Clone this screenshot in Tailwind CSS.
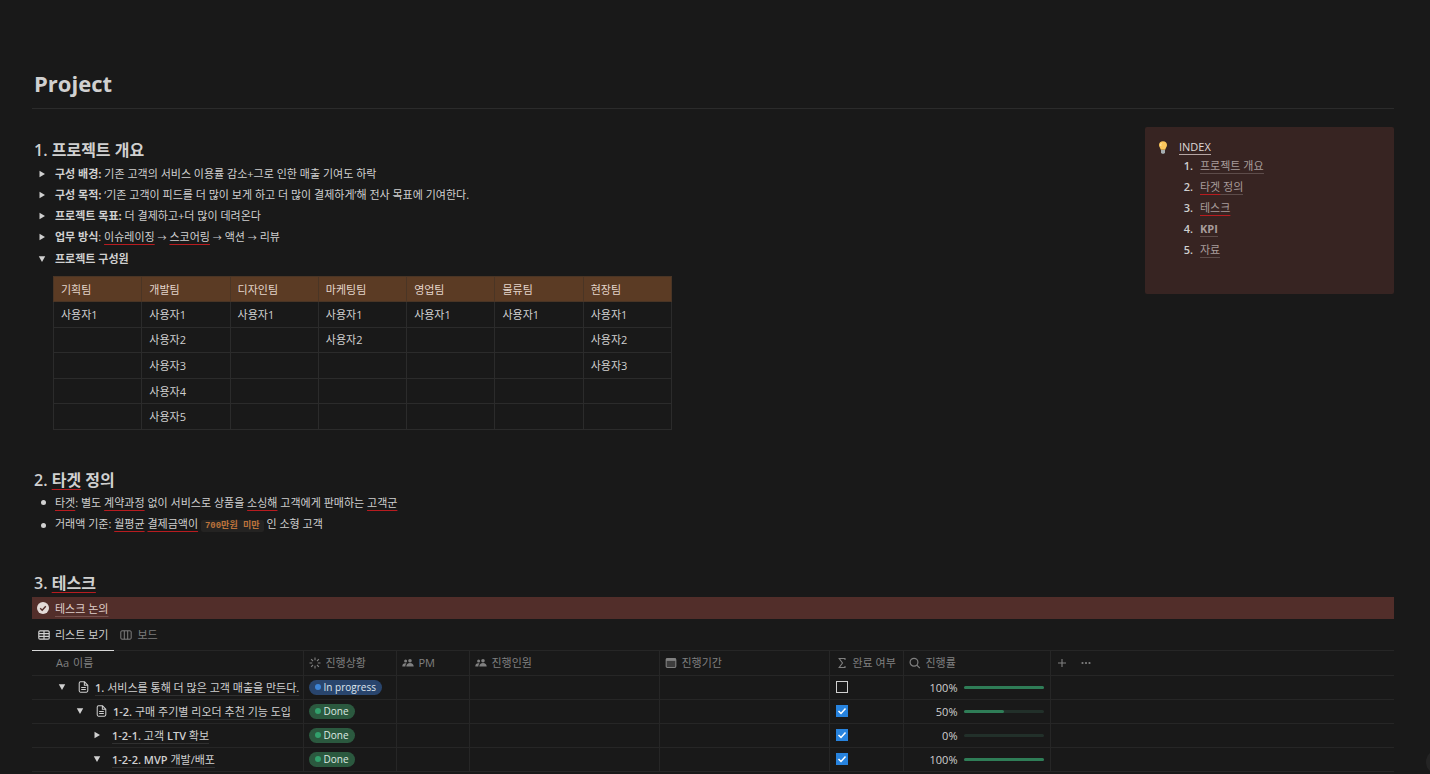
<!DOCTYPE html>
<html lang="ko">
<head>
<meta charset="utf-8">
<title>Project</title>
<script src="https://cdn.jsdelivr.net/npm/@tailwindcss/browser@4"></script>
</head>
<body class="min-h-screen overflow-hidden bg-[#191919] font-['Open_Sans','Noto_Sans_CJK_KR',sans-serif] text-[11px] leading-[21px] text-[#d0d0d0]">
<svg class="hidden">
  <symbol id="right" viewBox="0 0 8 8"><path d="M1.5 .8 7 4 1.5 7.2z" fill="currentColor"/></symbol>
  <symbol id="down" viewBox="0 0 8 8"><path d="M.8 1.2h6.4L4 7z" fill="currentColor"/></symbol>
  <symbol id="page" viewBox="0 0 12 14"><path d="M2.5 1h4.7L11 4.8V11.500a1.500 1.500 0 0 1-1.500 1.500h-7A1.500 1.500 0 0 1 1 11.500v-9A1.500 1.500 0 0 1 2.500 1zM7 1v4h4M3.300 7.500h5.400M3.300 10h5.400" fill="none" stroke="currentColor" stroke-width="1.200"/></symbol>
  <symbol id="people" viewBox="0 0 12 12"><g fill="currentColor"><circle cx="3.600" cy="4" r="1.500"/><circle cx="8" cy="3.700" r="1.800"/><path d="M.3 9.500c0-2 1.200-3.200 3-3.200.5 0 .9.100 1.200.300C3.700 7.300 3.400 8.300 3.400 9.500zM4.300 9.500c0-2.200 1.500-3.400 3.700-3.400s3.700 1.200 3.700 3.400z"/></g></symbol>
</svg>
<main class="pt-[67px] pr-9 pl-8">
  <h1 class="h-8 px-0.5 text-[22px] leading-8 font-bold">Project</h1>
  <hr class="mt-[9px] border-[#2b2b2b]">

  <div class="mt-[18px] flex items-start justify-between">
    <div class="pt-[11px]">
      <h2 class="px-0.5 text-[16px] leading-6 font-semibold">1. 프로젝트 개요</h2>
      <ul class="mt-px">
        <li class="flex items-center"><button class="flex w-[23px] pl-1.5" aria-label="펼치기"><svg class="size-2"><use href="#right"/></svg></button><p><b>구성 배경:</b> 기존 고객의 서비스 이용률 감소+그로 인한 매출 기여도 하락</p></li>
        <li class="flex items-center"><button class="flex w-[23px] pl-1.5" aria-label="펼치기"><svg class="size-2"><use href="#right"/></svg></button><p><b>구성 목적:</b> ‘기존 고객이 피드를 더 많이 보게 하고 더 많이 결제하게’해 전사 목표에 기여한다.</p></li>
        <li class="flex items-center"><button class="flex w-[23px] pl-1.5" aria-label="펼치기"><svg class="size-2"><use href="#right"/></svg></button><p><b>프로젝트 목표:</b> 더 결제하고+더 많이 데려온다</p></li>
        <li class="flex items-center"><button class="flex w-[23px] pl-1.5" aria-label="펼치기"><svg class="size-2"><use href="#right"/></svg></button><p><b>업무 방식</b>: <span class="underline decoration-[#b81c20] decoration-1 underline-offset-3">이슈레이징</span> <span class="text-[9px]">→</span> <span class="underline decoration-[#b81c20] decoration-1 underline-offset-3">스코어링</span> <span class="text-[9px]">→</span> 액션 <span class="text-[9px]">→</span> 리뷰</p></li>
        <li class="flex items-center"><button class="flex w-[23px] pl-1.5" aria-label="접기"><svg class="size-2"><use href="#down"/></svg></button><p><b>프로젝트 구성원</b></p></li>
      </ul>
      <table class="mt-[7px] ml-[21px] h-[154px] w-[619px] table-fixed border-collapse text-left [&_td]:border [&_td]:border-[#2b2b2b] [&_td]:px-[7px] [&_th]:border [&_th]:border-[#4a3525] [&_th]:px-[7px] [&_th]:font-normal [&_tr]:h-[25px]">
        <thead class="bg-[#5b3b24] text-[#e4d5cb]"><tr><th>기획팀</th><th>개발팀</th><th>디자인팀</th><th>마케팅팀</th><th>영업팀</th><th>물류팀</th><th>현장팀</th></tr></thead>
        <tbody>
          <tr><td>사용자1</td><td>사용자1</td><td>사용자1</td><td>사용자1</td><td>사용자1</td><td>사용자1</td><td>사용자1</td></tr>
          <tr><td></td><td>사용자2</td><td></td><td>사용자2</td><td></td><td></td><td>사용자2</td></tr>
          <tr><td></td><td>사용자3</td><td></td><td></td><td></td><td></td><td>사용자3</td></tr>
          <tr><td></td><td>사용자4</td><td></td><td></td><td></td><td></td><td></td></tr>
          <tr><td></td><td>사용자5</td><td></td><td></td><td></td><td></td><td></td></tr>
        </tbody>
      </table>
    </div>
    <aside class="flex h-[167px] w-[249px] gap-2.5 rounded-xs bg-[#372422] pt-[9px] pl-3">
      <svg class="mt-[5px] h-[13px] w-3" viewBox="0 0 12 13"><path d="M6 .3C3.700.3 2 2 2 4.100c0 1.900 1.300 2.800 1.800 4.700h4.400C8.700 6.900 10 6 10 4.100 10 2 8.300.3 6 .3z" fill="#fcc75c"/><path d="M4.500 2.200C3.700 2.800 3.500 4 4 5" stroke="#fff0b8" fill="none"/><path d="M4 9h4v2.600L7.100 12.800H4.900L4 11.600z" fill="#a5adb0"/></svg>
      <nav>
        <a href="#" class="border-b border-[#b5a5a3] text-[#ded8d7]">INDEX</a>
        <ol class="-mt-0.5 list-decimal pl-[17px] marker:font-semibold [&_a]:border-b [&_a]:border-[#5d4c4a] [&_a]:text-[#a89c9b] [&_li]:h-[21px] [&_li]:pl-1">
          <li><a href="#">프로젝트 개요</a></li>
          <li><a href="#"><span class="underline decoration-[#b81c20] decoration-1 underline-offset-3">타겟</span> 정의</a></li>
          <li><a href="#"><span class="underline decoration-[#b81c20] decoration-1 underline-offset-3">테스크</span></a></li>
          <li><a href="#" class="font-bold">KPI</a></li>
          <li><a href="#">자료</a></li>
        </ol>
      </nav>
    </aside>
  </div>

  <h2 class="mt-[38px] px-0.5 text-[16px] leading-6 font-semibold">2. <span class="underline decoration-[#b81c20] decoration-1 underline-offset-3">타겟</span> 정의</h2>
  <ul>
    <li class="flex items-center"><i class="mr-[9px] ml-[9px] size-[5px] rounded-full bg-[#d0d0d0]"></i><p><span class="underline decoration-[#b81c20] decoration-1 underline-offset-3">타겟</span>: 별도 <span class="underline decoration-[#b81c20] decoration-1 underline-offset-3">계약과정</span> 없이 서비스로 상품을 <span class="underline decoration-[#b81c20] decoration-1 underline-offset-3">소싱해</span> 고객에게 판매하는 <span class="underline decoration-[#b81c20] decoration-1 underline-offset-3">고객군</span></p></li>
    <li class="flex items-center"><i class="mr-[9px] ml-[9px] size-[5px] rounded-full bg-[#d0d0d0]"></i><p>거래액 기준: <span class="underline decoration-[#b81c20] decoration-1 underline-offset-3">월평균</span> <span class="underline decoration-[#b81c20] decoration-1 underline-offset-3">결제금액이</span> <code class="rounded-xs bg-[#242322] px-1 py-px font-['Liberation_Mono','Noto_Sans_CJK_KR',monospace] text-[9px] font-bold text-[#bd733c]">700만원 미만</code> 인 소형 고객</p></li>
  </ul>

  <h2 class="mt-[34px] px-0.5 text-[16px] leading-6 font-semibold">3. <span class="underline decoration-[#b81c20] decoration-1 underline-offset-3">테스크</span></h2>
  <div class="mt-0.5 flex h-[22px] items-center gap-1.5 bg-[#522e2a] pl-[5px] text-[#e0d0cc]">
    <svg class="size-3" viewBox="0 0 12 12"><circle cx="6" cy="6" r="6" fill="#e3dbd8"/><path d="m3.200 6.200 2 2 3.600-4" fill="none" stroke="#522e2a" stroke-width="1.400"/></svg>
    <a href="#" class="underline decoration-[#75514d] underline-offset-3">테스크 논의</a>
  </div>
  <div class="flex h-8 border-b border-[#262626]" role="tablist">
    <button role="tab" aria-selected="true" class="-mb-px flex items-center gap-[5px] border-b border-[#d8d8d8] px-1.5"><svg class="h-2.5 w-3" viewBox="0 0 12 10"><path d="M2 .8h8q1.200 0 1.200 1.200v6q0 1.200-1.200 1.200H2Q.8 9.200.8 8V2Q.8.8 2 .8zM.8 3.600h10.400M.8 6.400h10.400M6 .8v8.400" fill="none" stroke="currentColor" stroke-width="1.200"/></svg>리스트 보기</button>
    <button role="tab" aria-selected="false" class="flex items-center gap-[5px] px-1.5 text-[#7d7d7d]"><svg class="h-2.5 w-3" viewBox="0 0 12 10"><path d="M2 .8h8q1.200 0 1.200 1.200v6q0 1.200-1.200 1.200H2Q.8 9.200.8 8V2Q.8.8 2 .8zM4.300.8v8.400M7.700.8v8.400" fill="none" stroke="currentColor"/></svg>보드</button>
  </div>
  <table class="w-full table-fixed border-collapse text-left whitespace-nowrap [&_a]:underline [&_a]:decoration-[#303030] [&_a]:underline-offset-3 [&_td]:border-r [&_td]:border-[#262626] [&_td]:p-0 [&_th]:border-r [&_th]:border-[#262626] [&_th]:p-0 [&_th]:font-normal [&_tr]:h-6 [&_tr]:border-b [&_tr]:border-[#262626] [&_tr>:last-child]:border-r-0">
    <colgroup><col class="w-[271px]"><col class="w-[93px]"><col class="w-[73px]"><col class="w-[190px]"><col class="w-[170px]"><col class="w-[74px]"><col class="w-[147px]"><col></colgroup>
    <thead class="text-[#808080]"><tr>
      <th><span class="flex gap-1 pl-6"><span>Aa</span>이름</span></th>
      <th><span class="flex items-center gap-[5px] pl-[5px]"><svg class="size-3" viewBox="0 0 12 12"><path d="M6 .5v2.700M6 8.800v2.700M.5 6h2.700M8.800 6h2.700M2.100 2.100 4 4M8 8l1.900 1.900M2.100 9.900 4 8M8 4l1.900-1.900" stroke="currentColor" stroke-width="1.100"/></svg>진행상황</span></th>
      <th><span class="flex items-center gap-[5px] pl-[5px]"><svg class="size-3"><use href="#people"/></svg>PM</span></th>
      <th><span class="flex items-center gap-[5px] pl-[5px]"><svg class="size-3"><use href="#people"/></svg>진행인원</span></th>
      <th><span class="flex items-center gap-[5px] pl-[5px]"><svg class="size-3" viewBox="0 0 12 12"><path d="M1.200 2.700q0-1.200 1.200-1.200h7.200q1.200 0 1.200 1.200v6.600q0 1.200-1.200 1.200H2.400q-1.200 0-1.200-1.200z" fill="#808080" fill-opacity=".35" stroke="currentColor" stroke-width="1.100"/><path d="M1 1.500h10v2.400H1z" fill="currentColor"/></svg>진행기간</span></th>
      <th><span class="flex items-center gap-[5px] pl-1.5"><svg class="size-3" viewBox="0 0 12 12"><path d="M9 3V1.500H3.200L6.500 6l-3.300 4.500H9V9" fill="none" stroke="currentColor" stroke-width="1.100"/></svg>완료 여부</span></th>
      <th><span class="flex items-center gap-[5px] pl-[5px]"><svg class="size-3" viewBox="0 0 12 12"><circle cx="5" cy="5.200" r="3.900" fill="none" stroke="currentColor" stroke-width="1.200"/><path d="m7.800 8.200 3 3" stroke="currentColor" stroke-width="1.200"/></svg>진행률</span></th>
      <th><span class="flex items-center gap-3 pl-[5px]"><button aria-label="속성 추가"><svg class="size-3" viewBox="0 0 12 12"><path d="M6 2v8M2 6h8" stroke="currentColor" stroke-width="1.100"/></svg></button><button aria-label="더 보기"><svg class="size-3" viewBox="0 0 12 12" fill="currentColor"><circle cx="2.500" cy="6" r="1.100"/><circle cx="6" cy="6" r="1.100"/><circle cx="9.500" cy="6" r="1.100"/></svg></button></span></th>
    </tr></thead>
    <tbody>
      <tr>
        <td><span class="flex items-center pl-[26px]"><button aria-label="접기"><svg class="size-2"><use href="#down"/></svg></button><svg class="mr-1.5 ml-3 h-3 w-[11px]"><use href="#page"/></svg><a href="#"><b class="font-semibold">1.</b> 서비스를 통해 더 많은 고객 매출을 만든다.</a></span></td>
        <td><span class="ml-[5px] flex h-[15px] w-fit items-center gap-[3px] rounded-full bg-[#29456d] px-1.5 text-[10px] text-[#dfe6ee]"><i class="size-1.5 rounded-full bg-[#3d84d6]"></i>In progress</span></td>
        <td></td><td></td><td></td>
        <td><input type="checkbox" aria-label="완료 여부" class="ml-1.5 block size-3 appearance-none border border-[#d0d0d0]"></td>
        <td><span class="flex items-center justify-end gap-1.5 pr-1.5"><span>100%</span><span class="h-[3px] w-20 rounded-full bg-[#22302a]"><i class="block h-full rounded-full bg-[#2f7d57]" style="width:100%"></i></span></span></td>
        <td></td>
      </tr>
      <tr>
        <td><span class="flex items-center pl-11"><button aria-label="접기"><svg class="size-2"><use href="#down"/></svg></button><svg class="mr-1.5 ml-3 h-3 w-[11px]"><use href="#page"/></svg><a href="#"><b class="font-semibold">1-2.</b> 구매 주기별 리오더 추천 기능 도입</a></span></td>
        <td><span class="ml-[5px] flex h-[15px] w-fit items-center gap-[3px] rounded-full bg-[#2b593f] px-1.5 text-[10px] text-[#dfe9e3]"><i class="size-1.5 rounded-full bg-[#32a06c]"></i>Done</span></td>
        <td></td><td></td><td></td>
        <td><span class="relative ml-1.5 block size-3"><input type="checkbox" checked aria-label="완료 여부" class="block size-3 appearance-none bg-[#2783de]"><svg class="pointer-events-none absolute inset-0 size-3" viewBox="0 0 12 12"><path d="m2.500 6 2.500 2.500 4.500-5" fill="none" stroke="#fff" stroke-width="1.500"/></svg></span></td>
        <td><span class="flex items-center justify-end gap-1.5 pr-1.5"><span>50%</span><span class="h-[3px] w-20 rounded-full bg-[#22302a]"><i class="block h-full rounded-full bg-[#2f7d57]" style="width:50%"></i></span></span></td>
        <td></td>
      </tr>
      <tr>
        <td><span class="flex items-center pl-[61px]"><button aria-label="펼치기"><svg class="size-2"><use href="#right"/></svg></button><a href="#" class="ml-[11px]"><b class="font-semibold">1-2-1.</b> 고객 <b class="font-semibold">LTV</b> 확보</a></span></td>
        <td><span class="ml-[5px] flex h-[15px] w-fit items-center gap-[3px] rounded-full bg-[#2b593f] px-1.5 text-[10px] text-[#dfe9e3]"><i class="size-1.5 rounded-full bg-[#32a06c]"></i>Done</span></td>
        <td></td><td></td><td></td>
        <td><span class="relative ml-1.5 block size-3"><input type="checkbox" checked aria-label="완료 여부" class="block size-3 appearance-none bg-[#2783de]"><svg class="pointer-events-none absolute inset-0 size-3" viewBox="0 0 12 12"><path d="m2.500 6 2.500 2.500 4.500-5" fill="none" stroke="#fff" stroke-width="1.500"/></svg></span></td>
        <td><span class="flex items-center justify-end gap-1.5 pr-1.5"><span>0%</span><span class="h-[3px] w-20 rounded-full bg-[#22302a]"></span></span></td>
        <td></td>
      </tr>
      <tr>
        <td><span class="flex items-center pl-[61px]"><button aria-label="접기"><svg class="size-2"><use href="#down"/></svg></button><a href="#" class="ml-[11px]"><b class="font-semibold">1-2-2. MVP</b> 개발/배포</a></span></td>
        <td><span class="ml-[5px] flex h-[15px] w-fit items-center gap-[3px] rounded-full bg-[#2b593f] px-1.5 text-[10px] text-[#dfe9e3]"><i class="size-1.5 rounded-full bg-[#32a06c]"></i>Done</span></td>
        <td></td><td></td><td></td>
        <td><span class="relative ml-1.5 block size-3"><input type="checkbox" checked aria-label="완료 여부" class="block size-3 appearance-none bg-[#2783de]"><svg class="pointer-events-none absolute inset-0 size-3" viewBox="0 0 12 12"><path d="m2.500 6 2.500 2.500 4.500-5" fill="none" stroke="#fff" stroke-width="1.500"/></svg></span></td>
        <td><span class="flex items-center justify-end gap-1.5 pr-1.5"><span>100%</span><span class="h-[3px] w-20 rounded-full bg-[#22302a]"><i class="block h-full rounded-full bg-[#2f7d57]" style="width:100%"></i></span></span></td>
        <td></td>
      </tr>
    </tbody>
  </table>
</main>
<button aria-label="도움말" class="fixed -right-5 bottom-0 size-6 rounded-full bg-[#242424]"></button>
</body>
</html>
